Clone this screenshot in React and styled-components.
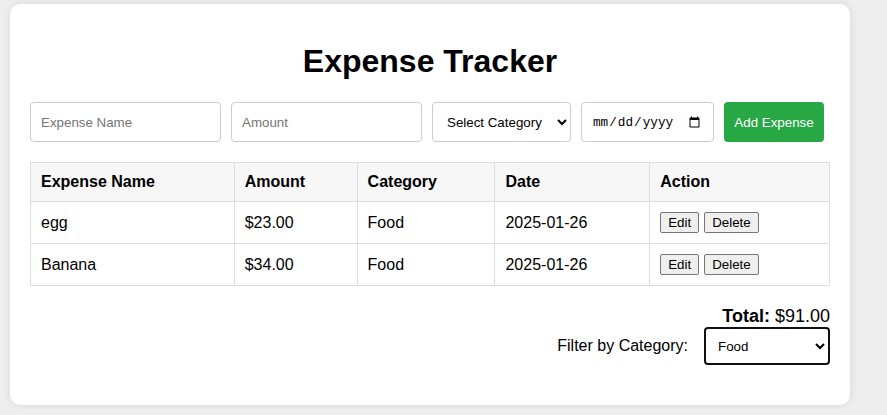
import React, { useState } from "react";
import styled, { createGlobalStyle } from "styled-components";

const Global = createGlobalStyle`
  html, body { margin: 0; padding: 0; background: #eeeeee; }
  body { font-family: "Liberation Sans", Arial, sans-serif; color: #000; }
  * { box-sizing: border-box; }
`;

const Page = styled.div`
  padding: 4px 10px;
`;

const Card = styled.div`
  width: 840px;
  background: #fff;
  border-radius: 10px;
  padding: 20px 20px 40px;
  box-shadow: 0 0 10px rgba(0, 0, 0, 0.1);
`;

const Title = styled.h1`
  margin: 19px 0 22px;
  font-size: 32px;
  font-weight: bold;
  text-align: center;
`;

const FormRow = styled.div`
  display: flex;
  gap: 10px;
  align-items: center;
`;

const TextInput = styled.input`
  width: ${(p) => p.$w}px;
  height: 40px;
  padding: 10px;
  border: 1px solid #ccc;
  border-radius: 4px;
  font-family: "Liberation Sans", Arial, sans-serif;
  font-size: 13.33px;
  color: #000;
  &::placeholder { color: #757575; }
  &[type="date"] {
    font-family: "Liberation Mono", monospace;
    font-size: 12.7px;
  }
`;

const Select = styled.select`
  height: 40px;
  width: ${(p) => p.$w}px;
  padding: 0 6px 0 10px;
  border: 1px solid #ccc;
  border-radius: 4px;
  background: #fff;
  font-family: "Liberation Sans", Arial, sans-serif;
  font-size: 13.33px;
  color: #000;
`;

const AddButton = styled.button`
  width: 100px;
  height: 40px;
  padding: 0;
  border: none;
  border-radius: 4px;
  background: #28a745;
  color: #fff;
  font-family: "Liberation Sans", Arial, sans-serif;
  font-size: 13.33px;
  cursor: pointer;
`;

const Table = styled.table`
  width: 100%;
  margin-top: 20px;
  border-collapse: collapse;
  font-size: 16px;
`;

const Th = styled.th`
  width: ${(p) => p.$w}px;
  text-align: left;
  padding: 10px;
  border: 1px solid #ddd;
  background: #f7f7f7;
  font-weight: bold;
`;

const Td = styled.td`
  padding: 10px;
  border: 1px solid #ddd;
  vertical-align: middle;
`;

const SmallButton = styled.button`
  height: 21px;
  padding: 1px 7px;
  margin-right: 5px;
  border: 1px solid #767676;
  border-radius: 2px;
  background: #efefef;
  font-family: "Liberation Sans", Arial, sans-serif;
  font-size: 13.33px;
  color: #000;
  vertical-align: middle;
`;

const Footer = styled.div`
  margin-top: 20px;
  display: flex;
  flex-direction: column;
  align-items: flex-end;
`;

const Total = styled.div`
  font-size: 18px;
  line-height: 21px;
  b { font-weight: bold; }
`;

const FilterRow = styled.div`
  display: flex;
  align-items: center;
  gap: 16px;
  font-size: 16px;
`;

const FilterSelect = styled.select`
  width: 126px;
  height: 38px;
  padding: 0 8px;
  border: 2px solid #111;
  border-radius: 4px;
  background: #fff;
  font-family: "Liberation Sans", Arial, sans-serif;
  font-size: 13.33px;
  color: #000;
`;

const columns = [
  ["Expense Name", 204],
  ["Amount", 123],
  ["Category", 138],
  ["Date", 155],
  ["Action", 180],
];

const expenses = [
  { name: "egg", amount: "$23.00", category: "Food", date: "2025-01-26" },
  { name: "Banana", amount: "$34.00", category: "Food", date: "2025-01-26" },
];

export default function App() {
  const [filter, setFilter] = useState("Food");
  return (
    <Page>
      <Global />
      <Card>
        <Title>Expense Tracker</Title>
        <FormRow>
          <TextInput $w={191} placeholder="Expense Name" />
          <TextInput $w={191} placeholder="Amount" />
          <Select $w={139} defaultValue="">
            <option value="">Select Category</option>
            <option>Food</option>
            <option>Transport</option>
          </Select>
          <TextInput $w={133} type="date" />
          <AddButton>Add Expense</AddButton>
        </FormRow>
        <Table>
          <thead>
            <tr>
              {columns.map(([c, w]) => (
                <Th key={c} $w={w}>{c}</Th>
              ))}
            </tr>
          </thead>
          <tbody>
            {expenses.map((e) => (
              <tr key={e.name}>
                <Td>{e.name}</Td>
                <Td>{e.amount}</Td>
                <Td>{e.category}</Td>
                <Td>{e.date}</Td>
                <Td>
                  <SmallButton>Edit</SmallButton>
                  <SmallButton>Delete</SmallButton>
                </Td>
              </tr>
            ))}
          </tbody>
        </Table>
        <Footer>
          <Total>
            <b>Total:</b> $91.00
          </Total>
          <FilterRow>
            <span>Filter by Category:</span>
            <FilterSelect value={filter} onChange={(e) => setFilter(e.target.value)}>
              <option>All</option>
              <option>Food</option>
              <option>Transport</option>
            </FilterSelect>
          </FilterRow>
        </Footer>
      </Card>
    </Page>
  );
}
